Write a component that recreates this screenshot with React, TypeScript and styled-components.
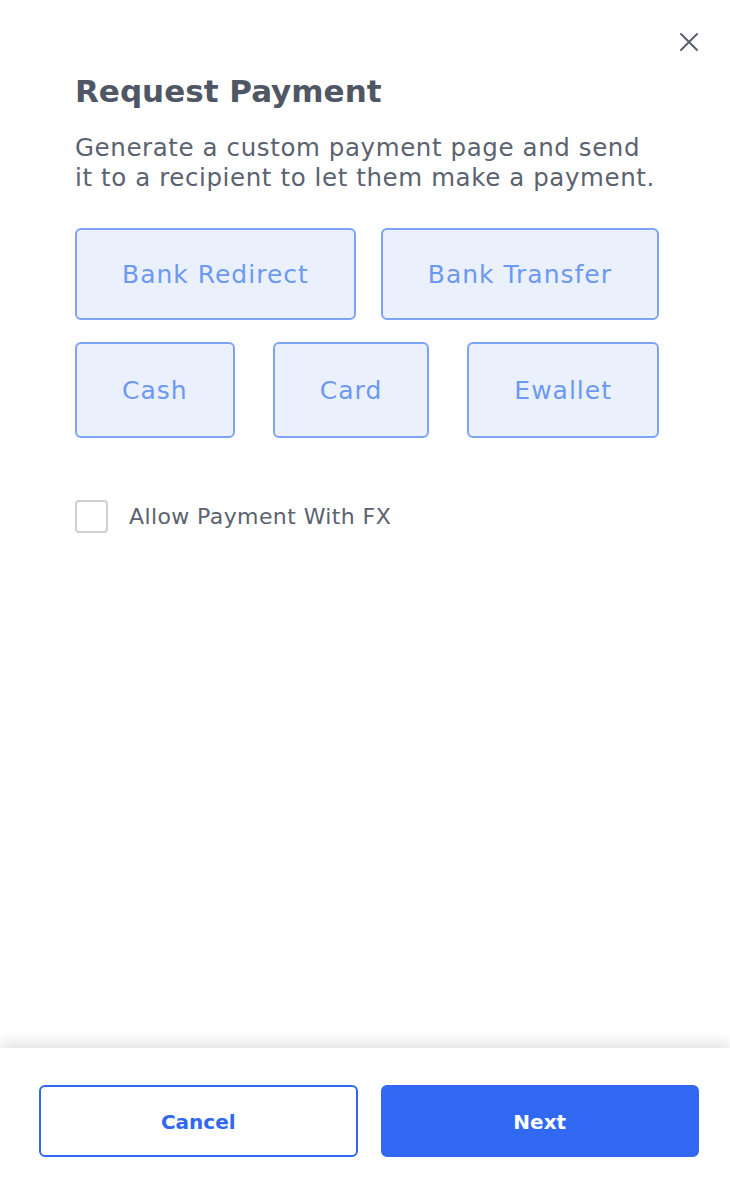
import React, { useState } from 'react';
import styled, { createGlobalStyle } from 'styled-components';

const colors = {
    title: '#4f5765',
    text: '#5b6270',
    optionText: '#6d98f4',
    optionBorder: '#7ea3f5',
    optionBg: '#eaf1fd',
    primary: '#3068f2',
    checkBorder: '#cfd0d2',
    white: '#ffffff',
};

const GlobalStyle = createGlobalStyle`
    html, body {
        margin: 0;
        padding: 0;
        background: ${colors.white};
        font-family: "DejaVu Sans", "Liberation Sans", sans-serif;
    }
    * { box-sizing: border-box; }
`;

const METHODS = [
    { label: 'Bank Redirect', tall: false },
    { label: 'Bank Transfer', tall: false },
    { label: 'Cash', tall: true },
    { label: 'Card', tall: true },
    { label: 'Ewallet', tall: true },
];

const App = (): JSX.Element => {
    const [selected, setSelected] = useState<string | null>(null);
    const [allowFx, setAllowFx] = useState(false);

    return (
        <>
            <GlobalStyle />
            <SModal>
                <SBody>
                    <SClose type='button' aria-label='Close'>
                        <svg width='20' height='20' viewBox='0 0 20 20'>
                            <path d='M2 2 L18 18 M18 2 L2 18' stroke='#59606d' strokeWidth='2' strokeLinecap='round' />
                        </svg>
                    </SClose>
                    <STitle>Request Payment</STitle>
                    <SDescription>
                        Generate a custom payment page and send
                        <br />
                        it to a recipient to let them make a payment.
                    </SDescription>
                    <SOptions>
                        {METHODS.map(({ label, tall }) => (
                            <SOption
                                key={label}
                                type='button'
                                tall={tall}
                                active={selected === label}
                                onClick={(): void => setSelected(label)}
                            >
                                {label}
                            </SOption>
                        ))}
                    </SOptions>
                    <SCheckRow>
                        <SCheckbox type='checkbox' checked={allowFx} onChange={(): void => setAllowFx(!allowFx)} />
                        <span>Allow Payment With FX</span>
                    </SCheckRow>
                </SBody>
                <SFooter>
                    <SButton type='button'>Cancel</SButton>
                    <SButton type='button' primary>Next</SButton>
                </SFooter>
            </SModal>
        </>
    );
};

const SModal = styled.div`
    display: flex;
    flex-direction: column;
    height: 100vh;
    background: ${colors.white};
`;

const SBody = styled.div`
    position: relative;
    flex: 1;
    padding: 73px 40px 0 75px;
`;

const SClose = styled.button`
    position: absolute;
    top: 32px;
    right: 31px;
    width: 20px;
    height: 20px;
    padding: 0;
    border: none;
    background: none;
    cursor: pointer;
    svg { display: block; }
`;

const STitle = styled.h1`
    margin: 0;
    font-size: 31px;
    line-height: 36px;
    font-weight: 700;
    color: ${colors.title};
`;

const SDescription = styled.p`
    margin: 24px 0 0;
    font-size: 24.5px;
    line-height: 30px;
    letter-spacing: 0.6px;
    white-space: nowrap;
    color: ${colors.text};
`;

const SOptions = styled.div`
    display: flex;
    flex-wrap: wrap;
    justify-content: space-between;
    align-items: flex-start;
    row-gap: 22px;
    width: 584px;
    margin-top: 35px;
`;

const SOption = styled.button<{ active?: boolean; tall?: boolean }>`
    height: ${(p): number => (p.tall ? 96 : 92)}px;
    padding: 0 45px;
    border: 2px solid ${colors.optionBorder};
    border-radius: 6px;
    background: ${(p): string => (p.active ? '#dbe7fd' : colors.optionBg)};
    color: ${colors.optionText};
    font-family: inherit;
    font-size: 25px;
    letter-spacing: 1px;
    cursor: pointer;
`;

const SCheckRow = styled.label`
    display: flex;
    align-items: center;
    gap: 21px;
    margin-top: 62px;
    font-size: 22px;
    letter-spacing: 0.4px;
    color: ${colors.text};
`;

const SCheckbox = styled.input`
    appearance: none;
    margin: 0;
    width: 33px;
    height: 33px;
    border: 2px solid ${colors.checkBorder};
    border-radius: 4px;
    background: ${colors.white};
    &:checked {
        background: ${colors.primary};
        border-color: ${colors.primary};
    }
`;

const SFooter = styled.div`
    display: grid;
    grid-template-columns: 1fr 1fr;
    column-gap: 23px;
    height: 144px;
    padding: 37px 31px 35px 39px;
    background: ${colors.white};
    box-shadow: 0 -5px 14px rgba(0, 0, 0, 0.12);
`;

const SButton = styled.button<{ primary?: boolean }>`
    border: 2px solid ${colors.primary};
    border-radius: 6px;
    background: ${(p): string => (p.primary ? colors.primary : colors.white)};
    color: ${(p): string => (p.primary ? colors.white : colors.primary)};
    font-family: inherit;
    font-size: 20px;
    font-weight: 700;
    padding-top: 3px;
    cursor: pointer;
`;

export default App;
